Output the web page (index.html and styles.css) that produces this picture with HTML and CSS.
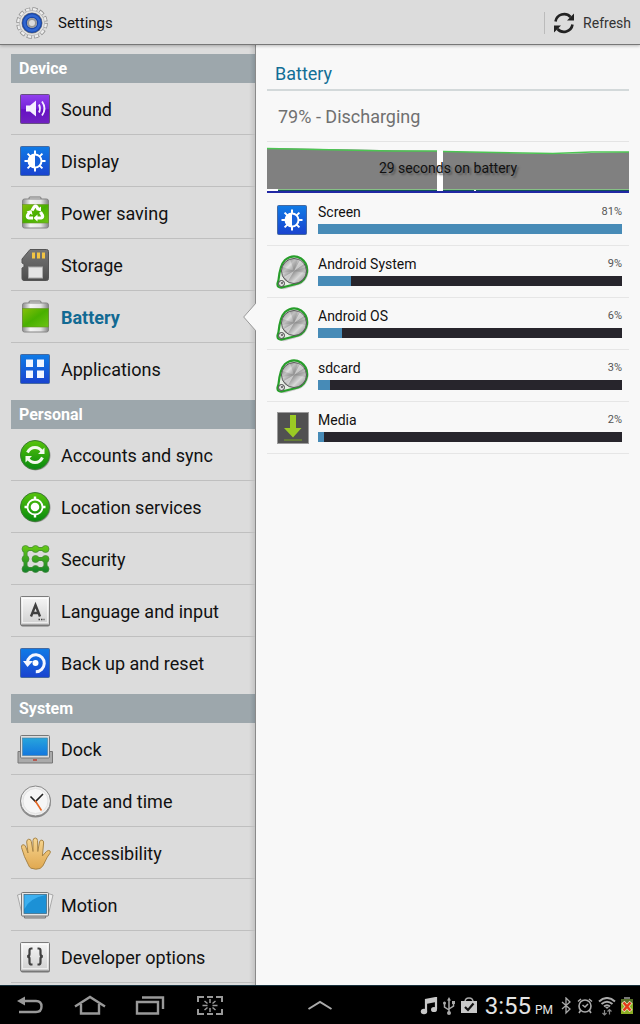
FILE: index.html
```html
<!DOCTYPE html>
<html lang="en">
<head>
<meta charset="utf-8">
<meta name="viewport" content="width=device-width, initial-scale=1">
<title>Settings</title>
<link rel="stylesheet" href="styles.css">
</head>
<body>
<svg class="defs" aria-hidden="true">
  <defs>
    <linearGradient id="blue" x1="0" y1="0" x2="0" y2="1"><stop offset="0" stop-color="#0f7be6"/><stop offset="1" stop-color="#1a43cf"/></linearGradient>
    <linearGradient id="purple" x1="0" y1="0" x2="0" y2="1"><stop offset="0" stop-color="#9140ee"/><stop offset="0.5" stop-color="#7420d8"/><stop offset="0.52" stop-color="#6610c4"/><stop offset="1" stop-color="#7022c0"/></linearGradient>
    <linearGradient id="green" x1="0" y1="0" x2="0" y2="1"><stop offset="0" stop-color="#58c40c"/><stop offset="1" stop-color="#06890f"/></linearGradient>
    <linearGradient id="security" gradientUnits="userSpaceOnUse" x1="0" y1="5" x2="0" y2="32"><stop offset="0" stop-color="#66c916"/><stop offset="1" stop-color="#10802a"/></linearGradient>
    <linearGradient id="cell" x1="0" y1="0" x2="1" y2="1"><stop offset="0" stop-color="#86c008"/><stop offset="0.5" stop-color="#48b000"/><stop offset="1" stop-color="#6cc414"/></linearGradient>
    <linearGradient id="metal" x1="0" y1="0" x2="1" y2="0"><stop offset="0" stop-color="#8c8c8c"/><stop offset="0.3" stop-color="#f4f4f4"/><stop offset="0.7" stop-color="#e4e4e4"/><stop offset="1" stop-color="#858585"/></linearGradient>
    <linearGradient id="key" x1="0" y1="0" x2="0" y2="1"><stop offset="0" stop-color="#f6f6f6"/><stop offset="1" stop-color="#d0d0d0"/></linearGradient>
    <linearGradient id="card" x1="0" y1="0" x2="0" y2="1"><stop offset="0" stop-color="#777"/><stop offset="1" stop-color="#4c4c4c"/></linearGradient>
    <linearGradient id="screen" x1="0" y1="0" x2="0" y2="1"><stop offset="0" stop-color="#28a5dc"/><stop offset="1" stop-color="#1277df"/></linearGradient>
    <linearGradient id="skin" x1="0" y1="0" x2="0" y2="1"><stop offset="0" stop-color="#f7d691"/><stop offset="1" stop-color="#e0a850"/></linearGradient>
    <linearGradient id="disc" x1="0" y1="0" x2="1" y2="1"><stop offset="0" stop-color="#777"/><stop offset="0.3" stop-color="#ddd"/><stop offset="0.5" stop-color="#929292"/><stop offset="0.7" stop-color="#d8d8d8"/><stop offset="1" stop-color="#777"/></linearGradient>

    <symbol id="i-sound" viewBox="0 0 37 37">
      <rect x="3.5" y="3.5" width="29" height="29" rx="1" fill="url(#purple)" stroke="#665080"/>
      <path d="M9 14.500h4l6-5v16l-6-5H9z" fill="#f4edff"/>
      <path d="M22 13.500q2 4 0 8M25 10.500q5 7 0 14" fill="none" stroke="#f4edff" stroke-width="1.800"/>
    </symbol>
    <symbol id="i-display" viewBox="0 0 37 37">
      <rect x="3.500" y="3.500" width="29" height="29" rx="1" fill="url(#blue)" stroke="#4569a0"/>
      <path d="M18 7.500v21M7.500 18h21M10.600 10.600l14.800 14.800M10.600 25.400l14.800-14.800" stroke="#fff" stroke-width="2"/>
      <circle cx="18" cy="18" r="7.500" fill="#fff"/>
      <path d="M18 12.500a5.500 5.500 0 0 1 0 11z" fill="#1761d9"/>
    </symbol>
    <symbol id="i-cell" viewBox="0 0 37 37">
      <path d="M12 4.500V3q0-1 1-1h10q1 0 1 1v1.500" fill="#ddd" stroke="#777"/>
      <rect x="5.500" y="4" width="26" height="29" rx="2" fill="url(#metal)" stroke="#858585"/>
      <rect x="5.500" y="9.500" width="26" height="18.500" fill="url(#cell)" stroke="#65902b" stroke-width=".6"/>
    </symbol>
    <symbol id="i-power" viewBox="0 0 37 37">
      <use href="#i-cell"/>
      <g fill="none" stroke="#fff" stroke-width="3.200">
        <path d="M15 15.500l2.200-3.500q1.300-1.700 2.600 0l1.500 2.500"/>
        <path d="M23.500 17l2 3.500q.6 2-1.500 2.500h-4M12.500 17l-2 3.500q-.6 2 1.500 2.500h4"/>
      </g>
      <path d="M24 11.500v5l-5-1.500zM20.500 19.500v7l-4-3.500zM9.500 16.500l5-1.500 1 5z" fill="#fff"/>
    </symbol>
    <symbol id="i-storage" viewBox="0 0 37 37">
      <path d="M13 2.500h16.500q2 0 2 2v27q0 2-2 2H7q-2 0-2-2V21l2-1v-3l-2-1v-4z" fill="url(#card)" stroke="#555"/>
      <path d="M15 5.500h3v6h-3zM20 5.500h3v6h-3zM25 5.500h3v6h-3z" fill="#f2c443"/>
      <rect x="11.500" y="20" width="14" height="11" fill="#e4e4e4" stroke="#aaa"/>
    </symbol>
    <symbol id="i-apps" viewBox="0 0 37 37">
      <rect x="3.500" y="3.500" width="29" height="29" rx="1" fill="url(#blue)" stroke="#4569a0"/>
      <path d="M9 8.500h7V16H9zM20 8.500h7V16h-7zM9 19.500h7V27H9zM20 19.500h7V27h-7z" fill="#f2f5ff"/>
    </symbol>
    <symbol id="i-sync" viewBox="0 0 37 37">
      <circle cx="18.500" cy="18.500" r="15" fill="#999"/><circle cx="18" cy="18" r="14.500" fill="url(#green)" stroke="#3b7d32"/>
      <path d="M10.500 15.500q2.500-5 7.500-5 4.500 0 7 4M25.500 20.500q-2.500 5-7.500 5-4.500 0-7-4" fill="none" stroke="#f2f8ee" stroke-width="3"/>
      <path d="M27.500 10.500V17H21zM8.500 25.500V19H15z" fill="#f2f8ee"/>
    </symbol>
    <symbol id="i-location" viewBox="0 0 37 37">
      <circle cx="18.500" cy="18.500" r="15" fill="#999"/><circle cx="18" cy="18" r="14.500" fill="url(#green)" stroke="#3b7d32"/>
      <circle cx="18" cy="18" r="7.500" fill="none" stroke="#fff" stroke-width="1.800"/>
      <circle cx="18" cy="18" r="4.300" fill="#fff"/>
      <path d="M18 7.500v3M18 25.500v3M7.500 18h3M25.500 18h3" stroke="#fff" stroke-width="2.400"/>
    </symbol>
    <symbol id="i-security" viewBox="0 0 37 37">
      <path d="M28.500 8h-20v20h20V18H18.500" fill="none" stroke="#4c8a3c" stroke-width="4"/>
      <g fill="url(#security)" stroke="#45863a" stroke-width=".7">
        <circle cx="8.500" cy="8" r="3.500"/><circle cx="18.500" cy="8" r="3.500"/><circle cx="28.500" cy="8" r="3.500"/>
        <circle cx="8.500" cy="18" r="3.500"/><circle cx="18.500" cy="18" r="3.500"/><circle cx="28.500" cy="18" r="3.500"/>
        <circle cx="8.500" cy="28" r="3.500"/><circle cx="18.500" cy="28" r="3.500"/><circle cx="28.500" cy="28" r="3.500"/>
      </g>
      <path d="M28.500 8h-20v20h20V18H18.500" fill="none" stroke="url(#security)" stroke-width="2.600"/>
    </symbol>
    <symbol id="i-key" viewBox="0 0 37 37">
      <rect x="3.500" y="4.500" width="29.500" height="29" rx="2" fill="#777"/>
      <rect x="3.500" y="3.500" width="29" height="28.500" rx="1" fill="url(#key)" stroke="#7b7b7b"/>
      <rect x="5.500" y="5.500" width="25" height="24" fill="none" stroke="#fff" opacity=".6"/>
    </symbol>
    <symbol id="i-language" viewBox="0 0 37 37">
      <use href="#i-key"/>
      <path d="M14 23.500l4.500-11.500L23 23.500M15.500 20h6" fill="none" stroke="#404040" stroke-width="2.400"/>
      <path d="M21.500 26.500h6" stroke="#404040" stroke-width="1.500" stroke-dasharray="1.500 1"/>
    </symbol>
    <symbol id="i-reset" viewBox="0 0 37 37">
      <rect x="3.500" y="3.500" width="29" height="29" rx="1" fill="url(#blue)" stroke="#4569a0"/>
      <path d="M10.300 17.500a8.500 8.500 0 1 1 8.500 9.300" fill="none" stroke="#f4f7ff" stroke-width="3"/>
      <path d="M6 16h10l-5.500 6z" fill="#f4f7ff"/><circle cx="18.500" cy="18" r="3" fill="#fff"/>
    </symbol>
    <symbol id="i-dock" viewBox="0 0 37 37">
      <path d="M1 20.500h34.500V32H1z" fill="#aaa" stroke="#777"/>
      <rect x="3.500" y="4.500" width="29" height="22.500" rx="1" fill="#ddd" stroke="#777"/>
      <rect x="5.500" y="7" width="25" height="17.500" fill="url(#screen)" stroke="#467c9b" stroke-width=".6"/>
      <path d="M16 29h4" stroke="#b84034" stroke-width="1.500"/>
    </symbol>
    <symbol id="i-clock" viewBox="0 0 37 37">
      <circle cx="18.500" cy="19" r="15.500" fill="#888"/><circle cx="18.500" cy="18" r="15" fill="#eee" stroke="#888"/>
      <circle cx="18.500" cy="18" r="12.500" fill="#f6f6f6" stroke="#e2e2e2"/>
      <path d="M13.500 13.500l5 5L26 11" fill="none" stroke="#222" stroke-width="1.600"/>
      <path d="M18 17.500l6.500 10" stroke="#e76722" stroke-width="1.600"/>
    </symbol>
    <symbol id="i-hand" viewBox="0 0 37 37">
      <path d="M11.500 30Q7 22 4.500 12.500q-.4-2.500 1.500-2.800 2-.2 2.800 2.300l2.200 6-1.300-11q0-2.500 2-2.800 2.200-.2 2.600 2.300L16 16.500V5.500Q16.200 3 18.300 3q2 0 2.200 2.500l.3 11 1.700-9.500q.6-2.300 2.500-1.900 1.900.5 1.600 2.900l-1.200 13 4-4.500q2-1.800 3.600-.6 1 1-.4 2.900-2.500 3-4.300 7.200-2.200 6-5.300 7.500-4 1.500-9-.3-1.700-.8-2.500-3.200z" fill="url(#skin)" stroke="#a88548"/>
    </symbol>
    <symbol id="i-motion" viewBox="0 0 37 37">
      <path d="M.5 8l5-1.500 3 21-3 1.500zM36 8l-5-1.500-3 21 3 1.500z" fill="#eee" stroke="#999" stroke-width=".8"/>
      <path d="M4.500 8.500l3 22.500h21l3-22.500z" fill="#bbb" stroke="#777"/>
      <rect x="4.500" y="5.500" width="27" height="23.500" rx="1" fill="#e6e6e6" stroke="#777"/>
      <rect x="7" y="7.500" width="22.500" height="19" fill="#1c91d6" stroke="#456f88" stroke-width=".8"/>
      <path d="M7.500 8h21q-16 3-21 14z" fill="#3db0f0"/>
    </symbol>
    <symbol id="i-developer" viewBox="0 0 37 37">
      <use href="#i-key"/>
      <path d="M15.500 9.500h-1.200q-1.800 0-1.800 2V15q0 2.200-2.300 2.300 2.300.2 2.300 2.400v3.500q0 2.300 1.800 2.300h1.200M20.500 9.500h1.200q1.800 0 1.800 2V15q0 2.200 2.300 2.300-2.300.2-2.300 2.400v3.500q0 2.300-1.800 2.300h-1.200" fill="none" stroke="#404040" stroke-width="2.200"/>
    </symbol>
    <symbol id="i-disc" viewBox="0 0 37 37">
      <path d="M5.500 25Q6 9 12 5q7-4.500 15-.5 7 4.500 6.500 12.500-.8 8.500-8 12.500-5 1.500-15.500 4.500-6 1-6-5z" fill="#c9c9c9" transform="translate(1 1)"/>
      <path d="M4.500 26Q6 11 11 6q8-6.500 16-1.500 7 5 6 13.500-1.500 8.500-9 11.500L8 33.500q-5 .5-4.500-4z" fill="#e8eee6" stroke="#289e2b" stroke-width="2.200"/>
      <circle cx="20" cy="17" r="12.500" fill="url(#disc)" stroke="#555"/>
      <path d="M20 17L9 13l-1 6zM20 17l12-4v6zM20 17l-4-12h8z" fill="#555" opacity=".22"/>
      <path d="M20 17L10 23l4 4zM20 17l10-7-4-4z" fill="#fff" opacity=".5"/>
      <circle cx="7.500" cy="29.500" r="3" fill="#ddd" stroke="#444"/><circle cx="8" cy="29" r="1" fill="#555"/>
    </symbol>
    <symbol id="i-media" viewBox="0 0 37 37">
      <rect x="3.500" y="2.500" width="31" height="31" fill="#515151" stroke="#9b9b9b"/>
      <path d="M16 5h6v13h5.500L19 27.500 10 18h6z" fill="#9bcb24"/><path d="M10 30h18" stroke="#79a51d"/>
    </symbol>
  </defs>
</svg>

<header class="topbar">
  <svg class="gear" viewBox="0 0 34 34" aria-hidden="true">
    <circle cx="17" cy="17" r="13" fill="none" stroke="#8c8c8c" stroke-width="5.500" stroke-dasharray="4.700 2.107"/>
    <circle cx="17" cy="17" r="13" fill="none" stroke="#eee" stroke-width="4" stroke-dasharray="3.500 3.307" stroke-dashoffset="-.6"/>
    <circle cx="17" cy="17" r="12.500" fill="#e4e4e4" stroke="#aaa" stroke-width=".7"/>
    <circle cx="17" cy="17" r="10.500" fill="#777"/>
    <circle cx="17" cy="17" r="7.500" fill="#ccc" stroke="#1a48aa" stroke-width="5"/>
    <circle cx="17" cy="17" r="7.500" fill="none" stroke="#2f66d2" stroke-width="2.500"/>
    <circle cx="17" cy="17" r="4" fill="#ddd" stroke="#999" stroke-width="2"/>
  </svg>
  <h1 class="title">Settings</h1>
  <button class="refresh" type="button">
    <svg class="refresh-icon" viewBox="0 0 22 22" aria-hidden="true">
      <path d="M2.500 9.500A8.700 8.700 0 0 1 17.500 5M19.500 12.500A8.700 8.700 0 0 1 4.500 17" fill="none" stroke="#222" stroke-width="2.600"/>
      <path d="M21 1.500v7h-7zM1 20.500v-7h7z" fill="#222"/>
    </svg>
    Refresh
  </button>
</header>

<div class="panes">
  <nav class="sidebar" aria-label="Settings">
    <section class="group">
      <h2 class="group-title">Device</h2>
      <a class="item" href="#sound"><svg class="icon"><use href="#i-sound"/></svg>Sound</a>
      <a class="item" href="#display"><svg class="icon"><use href="#i-display"/></svg>Display</a>
      <a class="item" href="#power"><svg class="icon"><use href="#i-power"/></svg>Power saving</a>
      <a class="item" href="#storage"><svg class="icon"><use href="#i-storage"/></svg>Storage</a>
      <a class="item current" href="#battery" aria-current="page"><svg class="icon"><use href="#i-cell"/></svg>Battery
        <svg class="notch" viewBox="0 0 13 28" aria-hidden="true"><path d="M13 0L.7 14 13 28z" fill="#f8f8f8"/><path d="M13 0L.7 14 13 28" fill="none" stroke="#999"/></svg></a>
      <a class="item" href="#applications"><svg class="icon"><use href="#i-apps"/></svg>Applications</a>
    </section>
    <section class="group">
      <h2 class="group-title">Personal</h2>
      <a class="item" href="#accounts"><svg class="icon"><use href="#i-sync"/></svg>Accounts and sync</a>
      <a class="item" href="#location"><svg class="icon"><use href="#i-location"/></svg>Location services</a>
      <a class="item" href="#security"><svg class="icon"><use href="#i-security"/></svg>Security</a>
      <a class="item" href="#language"><svg class="icon"><use href="#i-language"/></svg>Language and input</a>
      <a class="item" href="#reset"><svg class="icon"><use href="#i-reset"/></svg>Back up and reset</a>
    </section>
    <section class="group">
      <h2 class="group-title">System</h2>
      <a class="item" href="#dock"><svg class="icon"><use href="#i-dock"/></svg>Dock</a>
      <a class="item" href="#date"><svg class="icon"><use href="#i-clock"/></svg>Date and time</a>
      <a class="item" href="#accessibility"><svg class="icon"><use href="#i-hand"/></svg>Accessibility</a>
      <a class="item" href="#motion"><svg class="icon"><use href="#i-motion"/></svg>Motion</a>
      <a class="item" href="#developer"><svg class="icon"><use href="#i-developer"/></svg>Developer options</a>
    </section>
  </nav>

  <main class="detail" id="battery">
    <h2 class="detail-title">Battery</h2>
    <p class="state">79% - Discharging</p>
    <div class="chart">
      <svg class="plot" viewBox="0 0 362 46" preserveAspectRatio="none" aria-hidden="true">
        <path d="M0 1L170 4V42H0zM176 4.500L286 7 362 5V42H176z" fill="#808080"/>
        <path d="M0 1.500L125 4H170M176 4.500L286 6.500 325 5H362" fill="none" stroke="#4cc552" stroke-width="1.500"/>
        <path d="M170 4h6v40h-6z" fill="#fff"/>
        <path d="M0 42h362v2H0z" fill="#fff"/>
        <path d="M11 42h159v1H11zM176 42h186v1H176z" fill="#86c086"/>
        <path d="M11 43h159v1H11zM176 43h31v1h-31zM209 43h153v1H209z" fill="#10505c"/>
        <path d="M0 44h362v2H0z" fill="#2128a4"/>
      </svg>
      <span class="chart-label">29 seconds on battery</span>
    </div>
    <ul class="usage">
      <li class="use"><svg class="icon"><use href="#i-display"/></svg><div class="use-body"><label for="u1">Screen</label><span class="pct">81%</span><progress id="u1" value="100" max="100"></progress></div></li>
      <li class="use"><svg class="icon"><use href="#i-disc"/></svg><div class="use-body"><label for="u2">Android System</label><span class="pct">9%</span><progress id="u2" value="11" max="100"></progress></div></li>
      <li class="use"><svg class="icon"><use href="#i-disc"/></svg><div class="use-body"><label for="u3">Android OS</label><span class="pct">6%</span><progress id="u3" value="8" max="100"></progress></div></li>
      <li class="use"><svg class="icon"><use href="#i-disc"/></svg><div class="use-body"><label for="u4">sdcard</label><span class="pct">3%</span><progress id="u4" value="4" max="100"></progress></div></li>
      <li class="use"><svg class="icon"><use href="#i-media"/></svg><div class="use-body"><label for="u5">Media</label><span class="pct">2%</span><progress id="u5" value="2" max="100"></progress></div></li>
    </ul>
  </main>
</div>

<footer class="sysbar">
  <div class="keys">
    <button class="key" type="button" aria-label="Back"><svg viewBox="0 0 32 24"><path d="M8 6h14q5.500 0 5.500 5.500T22 17H5" fill="none" stroke="#999" stroke-width="2.400"/><path d="M3 6l8-4.500v9z" fill="#999"/></svg></button>
    <button class="key" type="button" aria-label="Home"><svg viewBox="0 0 32 24"><path d="M1 11.500L16 2l15 9.500M7 9v9.500h18V9" fill="none" stroke="#999" stroke-width="2.400"/></svg></button>
    <button class="key" type="button" aria-label="Recent apps"><svg viewBox="0 0 32 24"><path d="M3 7h21v11.500H3z" fill="none" stroke="#999" stroke-width="2.400"/><path d="M8 2.500h21V14" fill="none" stroke="#999" stroke-width="2.400"/></svg></button>
    <button class="key" type="button" aria-label="Screenshot"><svg viewBox="0 0 32 24"><path d="M4 7V2h6M13 2h6M22 2h6v5M28 14v5h-6M19 19h-6M10 19H4v-5" fill="none" stroke="#999" stroke-width="2"/><path d="M16 4v4M16 13v4M8.500 10.500h5M18.500 10.500h5M10.500 6l3 2.500M21.500 6l-3 2.500M10.500 15l3-2.500M21.500 15l-3-2.500" stroke="#999" stroke-width="1.500"/></svg></button>
  </div>
  <button class="key" type="button" aria-label="Open mini apps"><svg viewBox="0 0 32 24"><path d="M4.500 14L16 7l11.500 7" fill="none" stroke="#aaa" stroke-width="2"/></svg></button>
  <div class="status">
    <svg width="18" height="20" viewBox="0 0 18 20" aria-hidden="true"><path d="M6 14V3l10-2v11" fill="none" stroke="#c8c8c8" stroke-width="2.200"/><path d="M6 3l10-2v4L6 7z" fill="#c8c8c8"/><ellipse cx="4" cy="14.500" rx="3.200" ry="2.800" fill="#c8c8c8"/><ellipse cx="14" cy="12.500" rx="3" ry="2.600" fill="#c8c8c8"/></svg>
    <svg width="14" height="20" viewBox="0 0 14 20" aria-hidden="true"><path d="M7 16V2M2.500 6v4L7 13M11.500 5v4L7 12" fill="none" stroke="#aaa" stroke-width="1.500"/><path d="M7 0l2 3.500H5z" fill="#aaa"/><circle cx="7" cy="16" r="2" fill="#aaa"/><circle cx="2.500" cy="6" r="1.500" fill="#aaa"/><path d="M10 4h3v3h-3z" fill="#aaa"/></svg>
    <svg width="18" height="20" viewBox="0 0 18 20" aria-hidden="true"><path d="M5 5q0-4 4-4t4 4" fill="none" stroke="#aaa" stroke-width="1.500"/><path d="M1 4h16v12H1z" fill="#c8c8c8"/><path d="M5 10l3 3 5.500-6.500" fill="none" stroke="#111" stroke-width="2.200"/></svg>
    <time class="clock" datetime="15:55">3:55 <span class="meridiem">PM</span></time>
    <svg width="12" height="20" viewBox="0 0 12 20" aria-hidden="true"><path d="M2 5l8 7-4 4V1l4 4-8 7" fill="none" stroke="#aaa" stroke-width="1.300"/></svg>
    <svg width="18" height="20" viewBox="0 0 18 20" aria-hidden="true"><circle cx="9" cy="9" r="6" fill="none" stroke="#aaa" stroke-width="1.600"/><path d="M6.500 8L9 10l3-3M2 4.500L5 2M16 4.500L13 2M4.500 13.500L3 16M13.500 13.500L15 16" fill="none" stroke="#aaa" stroke-width="1.600"/></svg>
    <svg width="18" height="20" viewBox="0 0 18 20" aria-hidden="true"><path d="M1 4.500q8-7 16 0M3.500 7q5.500-4.500 11 0M6 9.500q3-2.500 6 0" fill="none" stroke="#aaa" stroke-width="2"/><path d="M9 12l-2-2h4z" fill="#aaa"/><path d="M6.500 18v-5M4.500 16l2 2 2-2M11.500 12.500v5M9.500 14.500l2-2 2 2" fill="none" stroke="#888" stroke-width="1.200"/></svg>
    <svg width="14" height="20" viewBox="0 0 14 20" aria-hidden="true"><path d="M4 0h6v2H4z" fill="#777"/><path d="M1 2h12v15H1z" fill="#8cad24"/><path d="M1 2h12v4H1z" fill="#556d27"/><path d="M3 5l8 9M11 5l-8 9" stroke="#e3e6be" stroke-width="4"/><path d="M3.500 5.500l7 8M10.500 5.500l-7 8" stroke="#e43b19" stroke-width="2.600"/></svg>
  </div>
</footer>
</body>
</html>
```
FILE: styles.css
```css
* { box-sizing: border-box; }
body {
  margin: 0;
  min-height: 100vh;
  display: flex;
  flex-direction: column;
  font-family: Roboto, "Noto Sans", sans-serif;
  color: #111;
  background: #f8f8f8;
}
h1, h2, p, ul { margin: 0; padding: 0; font-weight: 400; }
button { border: 0; padding: 0; background: none; font: inherit; color: inherit; }
.defs { position: absolute; width: 0; height: 0; }

.topbar {
  display: flex;
  align-items: center;
  height: 45px;
  padding: 2px 9px 0 15px;
  background: #dcdcdc;
  border-bottom: 1px solid #777;
  box-shadow: 0 1px 3px rgba(0, 0, 0, .25);
  z-index: 1;
}
.gear { width: 34px; height: 34px; margin-right: 9px; }
.title { flex: 1; font-size: 15px; line-height: 20px; }
.refresh {
  display: flex;
  align-items: center;
  gap: 8px;
  height: 22px;
  padding-left: 8px;
  border-left: 1px solid #bbb;
  font-size: 14px;
  color: #333;
}
.refresh-icon { width: 22px; height: 22px; }

.panes { flex: 1; display: flex; }
.sidebar {
  width: 40%;
  padding: 9px 0 2px 11px;
  background: linear-gradient(to left, #c4c4c4, #dcdcdc 6px);
  border-right: 1px solid #8a8a8a;
}
.group + .group { margin-top: 5px; }
.group-title {
  height: 29px;
  padding-left: 8px;
  background: linear-gradient(to left, #89949a, #9da7ac 5px);
  color: #fff;
  font-size: 16px;
  font-weight: 700;
  line-height: 29px;
}
.item {
  position: relative;
  display: flex;
  align-items: center;
  gap: 7px;
  height: 52px;
  padding: 2px 0 0 6px;
  border-bottom: 1px solid #bfbfbf;
  color: #111;
  font-size: 18px;
  text-decoration: none;
}
.group:not(:last-child) .item:last-child { border-color: transparent; }
.current { color: #126a93; font-weight: 700; }
.icon { flex: none; width: 37px; height: 37px; }
.notch {
  position: absolute;
  top: 12px;
  right: -1px;
  width: 13px;
  height: 28px;
}

.detail { flex: 1; min-width: 0; padding: 11px; }
.detail-title {
  height: 35px;
  padding-left: 8px;
  border-bottom: 2px solid #d3d9da;
  color: #126f96;
  font-size: 18px;
  line-height: 36px;
}
.state {
  height: 51px;
  padding-left: 11px;
  border-bottom: 1px solid #e4e4e4;
  color: #707070;
  font-size: 18px;
  line-height: 52px;
}
.chart { position: relative; height: 46px; margin: 5px 0 1px; }
.plot { display: block; width: 100%; height: 100%; }
.chart-label {
  position: absolute;
  inset: 0;
  text-align: center;
  font-size: 14px;
  line-height: 42px;
  text-shadow: 2px 2px 2px #555;
}
.usage { list-style: none; }
.use {
  display: flex;
  align-items: center;
  gap: 7px;
  height: 52px;
  padding: 2px 7px 0;
  border-bottom: 1px solid #e6e6e6;
  font-size: 14px;
}
.use-body {
  flex: 1;
  display: grid;
  grid-template-columns: 1fr auto;
  row-gap: 3px;
  align-items: center;
  padding-bottom: 4px;
  line-height: 18px;
}
.pct { color: #555; font-size: 11px; }
progress {
  grid-column: 1 / -1;
  appearance: none;
  display: block;
  width: 100%;
  height: 10px;
  border: 0;
  background: #27252c;
}
progress::-webkit-progress-bar { background: #27252c; }
progress::-webkit-progress-value { background: #478bb7; }

.sysbar {
  display: grid;
  grid-template-columns: 1fr auto 1fr;
  align-items: center;
  height: 39px;
  background: #000;
  border-top: 1px solid #16303c;
  color: #e4e4e4;
}
.keys { display: flex; }
.key { width: 60px; height: 38px; }
.key svg { display: block; width: 32px; height: 24px; margin: 0 auto; }
.status {
  display: flex;
  justify-content: flex-end;
  align-items: center;
  gap: 4px;
  padding-right: 6px;
}
.clock { padding: 2px 3px 0; font-size: 24px; line-height: 36px; white-space: nowrap; }
.meridiem { margin-left: -2px; font-size: 12px; }
```
